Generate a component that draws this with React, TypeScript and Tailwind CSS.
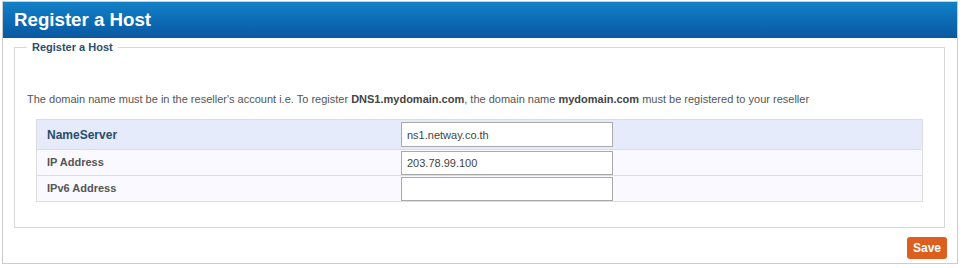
import React from "react";

export default function App() {
  const font = { fontFamily: '"Liberation Sans", Arial, sans-serif' };
  return (
    <div style={font} className="w-[962px] h-[268px] bg-white pt-[1px]">
      <div className="ml-[2px] w-[956px] h-[263px] border border-[#cccccc] flex flex-col">
        <div className="h-[36px] bg-gradient-to-b from-[#1281c7] to-[#0a58a2] flex items-center pl-[11px]">
          <span className="text-white font-bold text-[18.7px] leading-none">Register a Host</span>
        </div>
        <div className="px-[11px] pt-[2px]">
          <fieldset className="border border-[#d8d8d8] px-[12px] pb-[25px] w-[931px]">
            <legend className="px-[5px] text-[11px] font-bold text-[#2d4d6e] leading-[14px]">Register a Host</legend>
            <p className="mt-[38px] text-[11px] text-[#555555] leading-[14px]">
              The domain name must be in the reseller's account i.e. To register{" "}
              <b className="text-[#444444]">DNS1.mydomain.com</b>, the domain name{" "}
              <b className="text-[#444444]">mydomain.com</b> must be registered to your reseller
            </p>
            <div className="mt-[13px] mx-[9px] border border-[#dddddd]">
              <div className="flex items-center h-[30px] bg-[#e5ebfb] border-b border-[#dddddd]">
                <div className="w-[364px] pl-[10px] text-[12px] font-bold text-[#2c4b6c]">NameServer</div>
                <input
                  readOnly
                  value="ns1.netway.co.th"
                  className="w-[212px] h-[25px] border border-[#a9a9a9] bg-white pl-[5px] text-[11px] text-[#444444] outline-none"
                  style={font}
                />
              </div>
              <div className="flex items-center h-[26px] bg-[#f9f9ff] border-b border-[#dddddd]">
                <div className="w-[364px] pl-[10px] text-[11px] font-bold text-[#555555]">IP Address</div>
                <input
                  readOnly
                  value="203.78.99.100"
                  className="w-[212px] h-[24px] border border-[#a9a9a9] bg-white pl-[5px] text-[11px] text-[#444444] outline-none"
                  style={font}
                />
              </div>
              <div className="flex items-center h-[25px] bg-[#f9f9ff]">
                <div className="w-[364px] pl-[10px] text-[11px] font-bold text-[#555555]">IPv6 Address</div>
                <input
                  readOnly
                  value=""
                  className="w-[212px] h-[24px] border border-[#a9a9a9] bg-white pl-[5px] text-[11px] text-[#444444] outline-none"
                  style={font}
                />
              </div>
            </div>
          </fieldset>
          <div className="flex justify-end mt-[9px] -mr-[1px]">
            <button className="h-[22px] px-[6px] rounded-[3px] bg-[#dc5f1f] text-white text-[12px] font-bold leading-none">
              Save
            </button>
          </div>
        </div>
      </div>
    </div>
  );
}
